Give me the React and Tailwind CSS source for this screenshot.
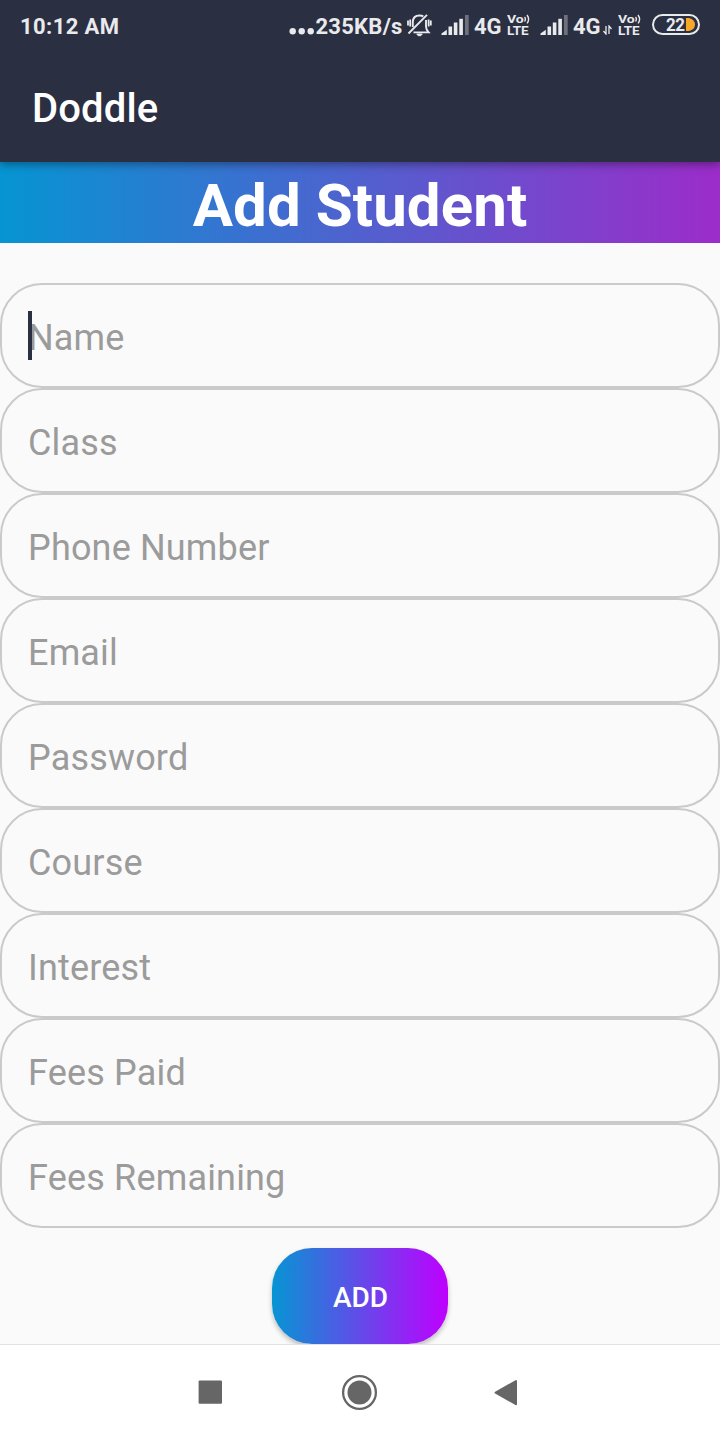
const fields = [
  "Name",
  "Class",
  "Phone Number",
  "Email",
  "Password",
  "Course",
  "Interest",
  "Fees Paid",
  "Fees Remaining",
];

function Signal({ className }) {
  return (
    <svg className={className} width="28" height="21" viewBox="0 0 28 21" fill="#e9eaec">
      <path d="M0.5 20 V18.5 L5.8 14.8 V20 Z" />
      <rect x="7.5" y="11.5" width="3.6" height="8.5" />
      <rect x="12.8" y="7.5" width="3.6" height="12.5" />
      <rect x="18.3" y="3.8" width="3.6" height="16.2" />
      <rect x="24" y="0" width="3.7" height="20" fill="#6e717d" />
    </svg>
  );
}

function VoLte({ className }) {
  return (
    <div className={className}>
      <div className="flex h-[11px] w-[23px] items-start">
        <span className="w-[17px] origin-left scale-x-[1.22] text-[11.5px] leading-[11px] whitespace-nowrap">Vo</span>
        <svg width="6" height="11" viewBox="0 0 6 11" fill="none" stroke="#e9eaec" strokeWidth="1.4">
          <path d="M0.5 3 Q2.3 5.2 0.5 7.5" />
          <path d="M3 1 Q6.2 5.2 3 9.4" />
        </svg>
      </div>
      <div className="h-[13px] w-[23px] origin-left scale-x-[1.12] text-[12px] leading-[13px]">LTE</div>
    </div>
  );
}

function SilentBell({ className }) {
  return (
    <svg className={className} width="25" height="24" viewBox="0 0 25 24" fill="none" stroke="#e9eaec" strokeWidth="1.9">
      <path d="M1.5 20.5 L20 1.8" />
      <path d="M5.8 14 V9 Q6 2.5 12.5 2.5 Q14.8 2.5 16.3 3.4 M19 7 V13.5 Q19 16.5 21.6 19.4 H6.5" />
      <path d="M9.8 21 H15.2 L13.8 22.7 H11.2 Z" fill="#e9eaec" strokeWidth="1" />
      <path d="M1 7.5 V12.5 M3.2 6.5 V13.5 M21.6 6.5 V13.5 M23.8 7.5 V12.5" strokeWidth="1.8" />
    </svg>
  );
}

function StatusBar() {
  return (
    <div className="flex h-[50px] items-start text-[22px] leading-[26px] font-bold text-[#e9eaec]">
      <span className="mt-[14px] ml-[20px] w-[269px] tracking-[0.4px] whitespace-nowrap">10:12 AM</span>
      <svg className="mt-[27px]" width="26" height="9" viewBox="0 0 26 9" fill="#e9eaec">
        <circle cx="3.7" cy="4.3" r="3.2" />
        <circle cx="12.7" cy="4.3" r="3.2" />
        <circle cx="21.7" cy="4.3" r="3.2" />
      </svg>
      <span className="mt-[14px] w-[91px] pl-[0.5px] tracking-[0.25px] whitespace-nowrap">235KB/s</span>
      <SilentBell className="mt-[13px] ml-px" />
      <Signal className="mt-[15px] ml-[9px]" />
      <span className="mt-[14px] ml-[5px] w-[33px]">4G</span>
      <VoLte className="mt-[14px]" />
      <Signal className="mt-[15px] ml-[10px]" />
      <span className="mt-[14px] ml-[5px] w-[30px]">4G</span>
      <svg className="mt-[25px]" width="10" height="10" viewBox="0 0 10 10" fill="none" stroke="#e9eaec" strokeWidth="1.3">
        <path d="M3 1 V9 L0.5 6" />
        <path d="M6 9 V1 L8.5 4" />
      </svg>
      <VoLte className="mt-[14px] ml-[5px]" />
      <div className="mt-[14px] ml-[11px] flex h-[21px] w-[48px] items-center rounded-full border-2 border-[#e9eaec] pl-[12px]">
        <span className="w-[20px] origin-left scale-x-[0.94] text-[18px] leading-[18px] tracking-[-0.4px]">22</span>
        <svg width="9" height="13" viewBox="0 0 9 13">
          <path d="M0 0 H3 Q9 1.5 9 6.5 Q9 11.5 3 13 H0 Z" fill="#f9a825" />
        </svg>
      </div>
    </div>
  );
}

function NavBar() {
  return (
    <nav className="flex h-24 items-start border-t border-[#e2e2e2] bg-white">
      <svg className="mt-[35px] ml-[198px]" width="24" height="24" fill="#666666">
        <rect x="0.6" y="0.5" width="23.4" height="23.2" rx="1" />
      </svg>
      <svg className="mt-[29px] ml-[119px]" width="37" height="37">
        <circle cx="18.5" cy="18.5" r="16.4" fill="none" stroke="#666666" strokeWidth="2.3" />
        <circle cx="18.5" cy="18.5" r="12" fill="#666666" />
      </svg>
      <svg className="mt-[34px] ml-[116px]" width="24" height="28" fill="#666666" stroke="#666666" strokeWidth="2" strokeLinejoin="round">
        <path d="M1.6 13.6 L22 2 V25.2 Z" />
      </svg>
    </nav>
  );
}

export default function App() {
  return (
    <div className="flex h-[1440px] w-[720px] flex-col overflow-hidden bg-[#fafafa] font-['Roboto',sans-serif]">
      <header className="relative h-[162px] shrink-0 bg-[#2b2f42] shadow-[0_3px_8px_rgba(0,0,0,0.35)]">
        <StatusBar />
        <h1 className="pt-[35px] pl-[32px] text-[40px] leading-[48px] font-medium tracking-[0.15px] text-white">Doddle</h1>
      </header>
      <h2 className="h-[81px] shrink-0 bg-linear-to-r/srgb from-[#0695d3] to-[#9c2cca] text-center text-[60px] leading-[87px] font-bold tracking-[0.08px] text-white">
        Add Student
      </h2>
      <form className="mt-10 flex flex-col">
        {fields.map((label, i) => (
          <div
            key={label}
            className="relative flex h-[105px] items-center rounded-[42px] border-2 border-[#cacaca] pt-[4px] pl-[26px] text-[36px] leading-[42px] tracking-[0.17px] text-[#9b9b9b]"
          >
            {label}
            {i === 0 && <span className="absolute top-[26px] left-[26px] h-[49px] w-[4px] bg-[#2b2f42]" />}
          </div>
        ))}
        <button
          type="button"
          className="mt-5 h-24 w-44 self-center rounded-[40px] bg-linear-to-r/srgb from-[#0695d3] to-[#bf00ff] pt-[3px] pl-px text-[28px] font-medium text-white shadow-[0_3px_5px_rgba(0,0,0,0.25)]"
        >
          ADD
        </button>
      </form>
      <div className="relative">
        <NavBar />
      </div>
    </div>
  );
}
